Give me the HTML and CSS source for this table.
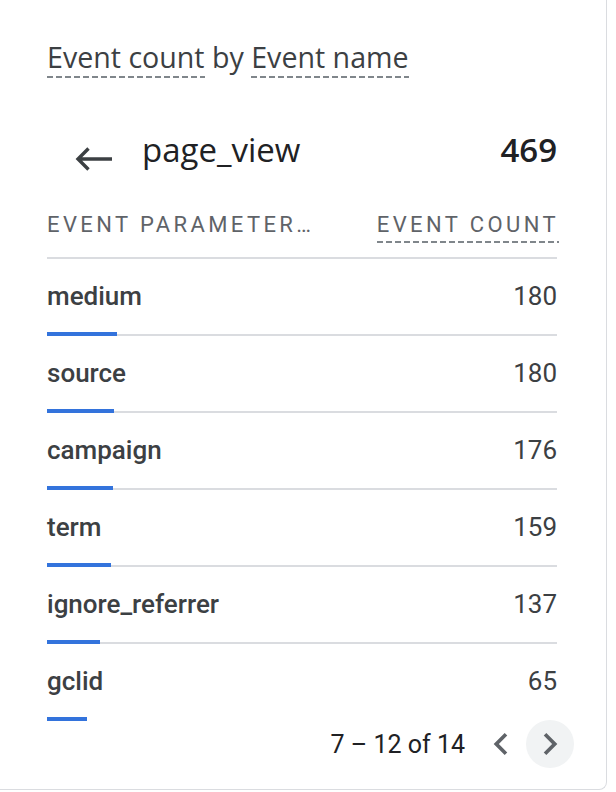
FILE: index.html
```html
<!DOCTYPE html>
<html lang="en">
<head>
<meta charset="utf-8">
<title>Event count by Event name</title>
<link rel="stylesheet" href="styles.css">
</head>
<body>
<div class="card">
  <h2 class="title"><span class="dim">Event count</span> by <span class="dim">Event name</span></h2>
  <div class="drill">
    <svg class="back" viewBox="0 0 38 28" width="38" height="28" aria-hidden="true">
      <path d="M37 14H4M13.5 3.5L3 14l10.5 10.5" fill="none" stroke="#3c4043" stroke-width="3.4"/>
    </svg>
    <span class="drill-name">page_view</span>
    <span class="drill-total">469</span>
  </div>
  <div class="thead">
    <span class="th">EVENT PARAMETER…</span>
    <span class="th th-metric">EVENT COUNT</span>
  </div>
  <ul class="rows">
    <li class="row"><div class="row-main"><span class="label">medium</span><span class="value">180</span></div><div class="bar" style="width:70px"></div></li>
    <li class="row"><div class="row-main"><span class="label">source</span><span class="value">180</span></div><div class="bar" style="width:67px"></div></li>
    <li class="row"><div class="row-main"><span class="label">campaign</span><span class="value">176</span></div><div class="bar" style="width:66px"></div></li>
    <li class="row"><div class="row-main"><span class="label">term</span><span class="value">159</span></div><div class="bar" style="width:64px"></div></li>
    <li class="row"><div class="row-main"><span class="label">ignore_referrer</span><span class="value">137</span></div><div class="bar" style="width:53px"></div></li>
    <li class="row"><div class="row-main"><span class="label">gclid</span><span class="value">65</span></div><div class="bar" style="width:40px"></div></li>
  </ul>
  <div class="pager">
    <span class="range">7 – 12 of 14</span>
    <button class="pg" aria-label="Previous page">
      <svg viewBox="0 0 24 24" width="44" height="44"><path d="M15.41 7.41L14 6l-6 6 6 6 1.41-1.41L10.83 12z"/></svg>
    </button>
    <button class="pg pg-active" aria-label="Next page">
      <svg viewBox="0 0 24 24" width="44" height="44"><path d="M10 6L8.59 7.41 13.17 12l-4.58 4.59L10 18l6-6z"/></svg>
    </button>
  </div>
</div>
</body>
</html>
```
FILE: styles.css
```css
html, body {
  margin: 0;
  padding: 0;
  background: #ffffff;
}

.card {
  width: 607px;
  height: 790px;
  box-sizing: border-box;
  padding: 0 49px 0 47px;
  border-right: 1px solid #dadce0;
  border-bottom: 1px solid #dadce0;
  border-bottom-right-radius: 8px;
  background: #ffffff;
  font-family: Roboto, "Liberation Sans", sans-serif;
  color: #3c4043;
}

.title {
  margin: 0;
  padding-top: 37px;
  font-family: "Open Sans", "Liberation Sans", sans-serif;
  font-size: 28.6px;
  font-weight: 400;
  line-height: 40px;
  color: #3c4043;
  white-space: nowrap;
}

.dim {
  padding-bottom: 1.5px;
  background-image: linear-gradient(to right, #80868b 0 6px, transparent 6px 9px);
  background-size: 9px 2px;
  background-repeat: repeat-x;
  background-position: left bottom;
}

.drill {
  display: flex;
  align-items: center;
  height: 40px;
  margin-top: 53px;
  font-family: "Open Sans", "Liberation Sans", sans-serif;
  font-size: 33px;
  line-height: 40px;
  color: #202124;
}

.back {
  flex: none;
  display: block;
  margin: 17px 29px 0 28px;
}

.drill-name {
  flex: 1;
}

.drill-total {
  font-weight: 600;
}

.thead {
  display: flex;
  justify-content: space-between;
  align-items: flex-start;
  margin-top: 40px;
  padding-bottom: 14px;
  border-bottom: 2px solid #dadce0;
  font-size: 22px;
  line-height: 30px;
  letter-spacing: 3.4px;
  color: #5f6368;
  white-space: nowrap;
}

.th-metric {
  margin-right: -2px;
  padding-bottom: 3px;
  background-image: linear-gradient(to right, #80868b 0 6px, transparent 6px 9px);
  background-size: 9px 2px;
  background-repeat: repeat-x;
  background-position: left bottom;
}

.rows {
  list-style: none;
  margin: 0;
  padding: 0;
}

.row {
  padding-top: 22px;
  border-bottom: 2px solid #dadce0;
}

.row:last-child {
  border-bottom-color: transparent;
}

.row-main {
  display: flex;
  justify-content: space-between;
  font-size: 26px;
  line-height: 30px;
  color: #3c4043;
}

.label {
  font-weight: 500;
}

.value {
  font-weight: 400;
}

.bar {
  height: 4px;
  margin-top: 21px;
  margin-bottom: -2px;
  background: #3373dc;
}

.pager {
  display: flex;
  justify-content: flex-end;
  align-items: center;
  height: 48px;
  margin-top: -1px;
  margin-right: -17px;
}

.range {
  margin-right: 12px;
  font-size: 25px;
  color: #202124;
}

.pg {
  width: 48px;
  height: 48px;
  padding: 0;
  border: none;
  border-radius: 50%;
  background: transparent;
  display: grid;
  place-items: center;
  fill: #5f6368;
}

.pg + .pg {
  margin-left: 1px;
}

.pg-active {
  background: #f1f3f4;
}

.pg svg {
  display: block;
}
```
